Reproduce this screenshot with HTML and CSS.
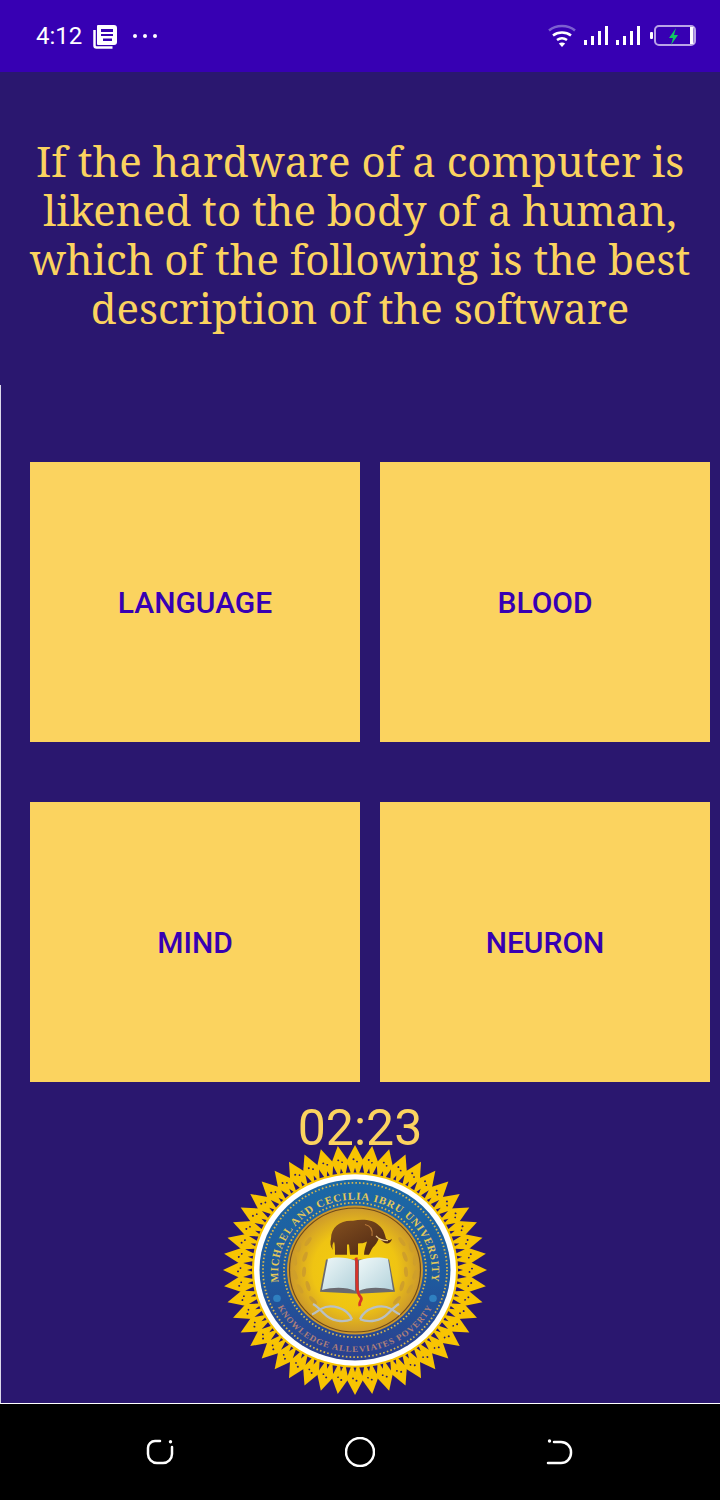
FILE: index.html
```html
<!DOCTYPE html>
<html lang="en">
<head>
<meta charset="utf-8">
<title>Quiz</title>
<link rel="stylesheet" href="styles.css">
</head>
<body>
<div class="phone">
  <header class="status">
    <div class="status-left">
      <span class="clock">4:12</span>
      <svg class="news" width="26" height="26" viewBox="0 0 26 26">
        <path class="w" fill-rule="evenodd" d="M6 2h16a3 3 0 0 1 3 3v14a3 3 0 0 1-3 3H6a1 1 0 0 1-1-1V3a1 1 0 0 1 1-1zM9 6v3h12V6zM9 11v2h12v-2zM11 15.500v2.500h9v-2.500z"/>
        <path class="ws" d="M2.500 7v15.500a2 2 0 0 0 2 2h16"/>
      </svg>
      <svg class="more" width="28" height="8" viewBox="0 0 28 8">
        <circle class="w" cx="4" cy="4" r="2"/><circle class="w" cx="14" cy="4" r="2"/><circle class="w" cx="24" cy="4" r="2"/>
      </svg>
    </div>
    <div class="status-right">
      <svg width="30" height="26" viewBox="0 0 30 26">
        <path class="wifi-dim" d="M2 7.500C9 1.500 21 1.500 28 7.500"/>
        <path class="wifi" d="M6 12.500C11 8.500 19 8.500 24 12.500"/>
        <path class="wifi" d="M10 17C13 14.800 17 14.800 20 17"/>
        <path class="w" d="M11.800 20.500C13.500 19.200 16.500 19.200 18.200 20.500L15 24z"/>
      </svg>
      <svg class="bars" width="24" height="20" viewBox="0 0 24 20">
        <rect class="w" x="0" y="14" width="3" height="5"/><rect class="w" x="7" y="10" width="3" height="9"/><rect class="w" x="14" y="5" width="3" height="14"/><rect class="w" x="21" y="0" width="3" height="19"/>
      </svg>
      <svg class="bars" width="24" height="20" viewBox="0 0 24 20">
        <rect class="w" x="0" y="14" width="3" height="5"/><rect class="w" x="7" y="10" width="3" height="9"/><rect class="w" x="14" y="5" width="3" height="14"/><rect class="w" x="21" y="0" width="3" height="19"/>
      </svg>
      <svg class="battery" width="46" height="22" viewBox="0 0 46 22">
        <rect class="w" x="0" y="7" width="3" height="7" rx="1"/>
        <rect class="batt" x="5" y="1" width="40" height="19" rx="4"/>
        <rect class="w" x="40" y="2" width="3.500" height="17"/>
        <path class="bolt" d="M26 3l-7 10h4l-2 7 7-10h-4z"/>
      </svg>
    </div>
  </header>

  <main class="screen">
    <div class="frame"></div>
    <h1 class="question">If the hardware of a computer is likened to the body of a human, which of the following is the best description of the software</h1>
    <section class="answers">
      <button class="answer">LANGUAGE</button>
      <button class="answer">BLOOD</button>
      <button class="answer">MIND</button>
      <button class="answer">NEURON</button>
    </section>
    <div class="timer">02:23</div>
    <svg class="seal" width="264" height="250" viewBox="-132 -132 264 264" preserveAspectRatio="none">
      <defs>
        <radialGradient id="gold" cx="50%" cy="50%" r="50%">
          <stop offset="0" stop-color="#f6d00c"/><stop offset=".62" stop-color="#efc413"/><stop offset="1" stop-color="#c9952e"/>
        </radialGradient>
        <linearGradient id="blue" x1="0" y1="0" x2="0" y2="1">
          <stop offset="0" stop-color="#1b69a6"/><stop offset=".55" stop-color="#1f5a9e"/><stop offset="1" stop-color="#2a3f8f"/>
        </linearGradient>
        <linearGradient id="page" x1="0" y1="0" x2="1" y2="1">
          <stop offset="0" stop-color="#eef7f8"/><stop offset="1" stop-color="#b4d3dc"/>
        </linearGradient>
        <linearGradient id="hide" x1="0" y1="0" x2="1" y2="1">
          <stop offset="0" stop-color="#84501f"/><stop offset="1" stop-color="#4a2412"/>
        </linearGradient>
        <g id="t1">
          <polygon class="ray" points="0,-132 8.500,-115 -8.500,-115"/>
          <polygon class="notch" transform="rotate(3.750)" points="0,-112 2.400,-103 -2.400,-103"/>
          <polygon class="notch" points="0,-108 1.500,-103 -1.500,-103"/>
          <circle class="notch" cx="-1.500" cy="-117" r="1"/>
          <circle class="notch" cx="2" cy="-114.500" r=".9"/>
        </g>
        <g id="t2"><use href="#t1"/><use href="#t1" transform="rotate(7.500)"/></g>
        <g id="t4"><use href="#t2"/><use href="#t2" transform="rotate(15)"/></g>
        <g id="t8"><use href="#t4"/><use href="#t4" transform="rotate(30)"/></g>
        <g id="t16"><use href="#t8"/><use href="#t8" transform="rotate(60)"/></g>
        <ellipse id="leaf" class="leaf" cx="0" cy="0" rx="2" ry="5.500"/>
        <g id="laurel">
          <use href="#leaf" transform="translate(-56,-24) rotate(10)"/>
          <use href="#leaf" transform="translate(-60,-10) rotate(-5)"/>
          <use href="#leaf" transform="translate(-60,5) rotate(-18)"/>
          <use href="#leaf" transform="translate(-55,20) rotate(-30)"/>
          <use href="#leaf" transform="translate(-47,-30) rotate(35)"/>
          <use href="#leaf" transform="translate(-50,-14) rotate(20)"/>
          <use href="#leaf" transform="translate(-51,2) rotate(5)"/>
          <use href="#leaf" transform="translate(-47,17) rotate(-15)"/>
          <use href="#leaf" transform="translate(-42,32) rotate(-40)"/>
        </g>
        <g id="fish">
          <path class="fish" d="M-3,52C-12,56 -24,54 -31,46C-34,43 -38,38 -42,36"/>
          <path class="fish" d="M-3,52C-8,40 -24,35 -34,41C-37,43 -40,46 -43,47"/>
        </g>
        <path id="arc-top" d="M-75,20A77,77 0 1 1 75,20"/>
        <path id="arc-bottom" d="M-79,36A87,87 0 0 0 79,36"/>
      </defs>
      <circle class="ray" r="116"/>
      <use href="#t16"/><use href="#t16" transform="rotate(120)"/><use href="#t16" transform="rotate(240)"/>
      <circle class="ring" r="101"/>
      <circle r="95.500" fill="url(#blue)"/>
      <circle class="dots-out" r="92"/>
      <circle class="dots-in" r="71"/>
      <circle class="blue-dot" cx="-78" cy="30" r="3.800"/>
      <circle class="blue-dot" cx="78" cy="30" r="3.800"/>
      <text class="arc-top"><textPath href="#arc-top" startOffset="50%">MICHAEL AND CECILIA IBRU UNIVERSITY</textPath></text>
      <text class="arc-bottom"><textPath href="#arc-bottom" startOffset="50%">KNOWLEDGE ALLEVIATES POVERTY</textPath></text>
      <circle r="68" fill="url(#gold)"/>
      <circle class="gold-edge" r="65.500"/>
      <use href="#laurel"/><use href="#laurel" transform="scale(-1,1)"/>
      <path fill="url(#hide)" d="M-24,-33C-24,-46 -14,-53 -2,-52C8,-54 18,-53 24,-47C29,-43 30,-37 31,-33C33,-31 35,-31 37,-33C36,-28 32,-27 29,-29C26,-31 25,-33 24,-34C23,-30 20,-26 18,-24C16,-21 15,-18 14,-16L9,-16C9,-21 11,-26 12,-30C9,-28 6,-28 3,-28L3,-16L-5,-16L-6,-27L-8,-27L-8,-16L-20,-16C-20,-22 -20,-27 -21,-30C-23,-27 -23,-24 -22,-21C-25,-25 -25,-29 -24,-33z"/>
      <path class="tusk" d="M21,-36C24,-32 28,-31 33,-31"/>
      <path class="ear" d="M10,-48C15,-47 18,-43 17,-36"/>
      <path class="book-back" d="M-35,23L-29,-11L2,-11L34,-11L40,23L3,25z"/>
      <path fill="url(#page)" d="M-33,21C-22,18 -8,18 0,22L0,-10C-8,-14 -20,-14 -27,-12z"/>
      <path fill="url(#page)" d="M38,21C26,18 12,18 4,22L4,-10C12,-14 26,-14 33,-12z"/>
      <path class="ribbon" d="M1,-13C3,-5 1,5 2,14C2,22 3,26 6,29C8,32 3,34 5,38"/>
      <use href="#fish"/><use href="#fish" transform="translate(2,0) scale(-1,1)"/>
    </svg>
  </main>

  <nav class="navbar">
    <svg width="30" height="30" viewBox="0 0 30 30">
      <path class="nav" d="M15 4H10a7 7 0 0 0-7 7v6a9 9 0 0 0 9 9h6a9 9 0 0 0 9-9V10"/>
      <circle class="w" cx="25.500" cy="4.800" r="1.700"/>
    </svg>
    <svg width="30" height="30" viewBox="0 0 30 30">
      <circle class="nav" cx="15" cy="15" r="14"/>
    </svg>
    <svg width="30" height="30" viewBox="0 0 30 30">
      <path class="nav" d="M9 5h7a10 10 0 0 1 10 10v1a10 10 0 0 1-10 10H3"/>
      <circle class="w" cx="4.500" cy="4" r="1.700"/>
    </svg>
  </nav>
</div>
</body>
</html>
```

FILE: styles.css
```css
* { box-sizing: border-box; }

html, body {
  margin: 0;
  padding: 0;
  background: #000;
}

.phone {
  width: 720px;
  height: 1500px;
  display: flex;
  flex-direction: column;
  font-family: Roboto, "Liberation Sans", sans-serif;
  overflow: hidden;
}

.status {
  height: 72px;
  flex: none;
  background: #3700b3;
  color: #fff;
  display: flex;
  align-items: center;
  justify-content: space-between;
  padding: 0 24px 0 36px;
}

.status-left, .status-right {
  display: flex;
  align-items: center;
}

.clock {
  font-size: 24px;
  line-height: 30px;
}

.news { margin-left: 10px; }
.more { margin-left: 13px; }

.status-right svg + svg { margin-left: 7px; }
.status-right .bars + .bars { margin-left: 8px; }
.status-right .battery { margin-left: 10px; }

.w { fill: #fff; }
.ws { fill: none; stroke: #fff; stroke-width: 2.500; }
.wifi { fill: none; stroke: #fff; stroke-width: 2.500; }
.wifi-dim { fill: none; stroke: #7c5fd0; stroke-width: 2.500; }
.batt { fill: none; stroke: #b9a4e6; stroke-width: 2; }
.bolt { fill: #12c964; }

.screen {
  position: relative;
  flex: 1;
  min-height: 0;
  background: #2a176f;
  display: flex;
  flex-direction: column;
  align-items: center;
}

.frame {
  position: absolute;
  left: 0;
  right: 0;
  top: 313px;
  bottom: 0;
  border-left: 1px solid #dcd9ea;
  border-bottom: 1px solid #fff;
  pointer-events: none;
}

.question {
  width: 680px;
  margin: 64px 0 0;
  font-family: "Noto Serif", "DejaVu Serif Condensed", "DejaVu Serif", serif;
  font-size: 42px;
  line-height: 49px;
  font-weight: 400;
  text-align: center;
  color: #fbd35f;
}

.answers {
  align-self: flex-start;
  margin: 130px 0 0 30px;
  display: grid;
  grid-template-columns: 330px 330px;
  grid-auto-rows: 280px;
  column-gap: 20px;
  row-gap: 60px;
}

.answer {
  border: 0;
  padding: 0;
  background: #fbd35f;
  color: #3700b3;
  font-family: Roboto, "Liberation Sans", sans-serif;
  font-size: 30px;
  font-weight: 500;
}

.timer {
  position: relative;
  z-index: 1;
  margin-top: 22px;
  font-size: 50px;
  line-height: 48px;
  color: #fbd35f;
}

.seal {
  display: block;
  flex: none;
  margin: -7px 10px 0 0;
}

.ray { fill: #f8c402; }
.notch { fill: #2a176f; }
.ring { fill: #fff; }
.dots-out, .dots-in {
  fill: none;
  stroke: #d9b84f;
  stroke-width: 1.800;
  stroke-dasharray: 1.600 2.200;
}
.blue-dot { fill: #2f80c0; }
.arc-top {
  font-family: "Liberation Serif", serif;
  font-size: 11px;
  font-weight: 700;
  letter-spacing: .9px;
  text-anchor: middle;
  fill: #e4c95a;
}
.arc-bottom {
  font-family: "Liberation Serif", serif;
  font-size: 9px;
  font-weight: 700;
  letter-spacing: .9px;
  text-anchor: middle;
  fill: #b08078;
}
.gold-edge { fill: none; stroke: #6e4a1c; stroke-width: 1.200; }
.leaf { fill: #cf9f2a; }
.tusk { fill: none; stroke: #e8c98a; stroke-width: 1.300; }
.ear { fill: none; stroke: #b97a3a; stroke-width: 1.200; }
.book-back { fill: #6a6a70; }
.ribbon { fill: none; stroke: #d8332a; stroke-width: 2.800; }
.fish { fill: none; stroke: #b9c0c4; stroke-width: 2.300; }

.navbar {
  height: 96px;
  flex: none;
  background: #000;
  display: flex;
  justify-content: center;
  align-items: center;
  gap: 170px;
}

.nav { fill: none; stroke: #fff; stroke-width: 2.500; stroke-linecap: round; }
```
